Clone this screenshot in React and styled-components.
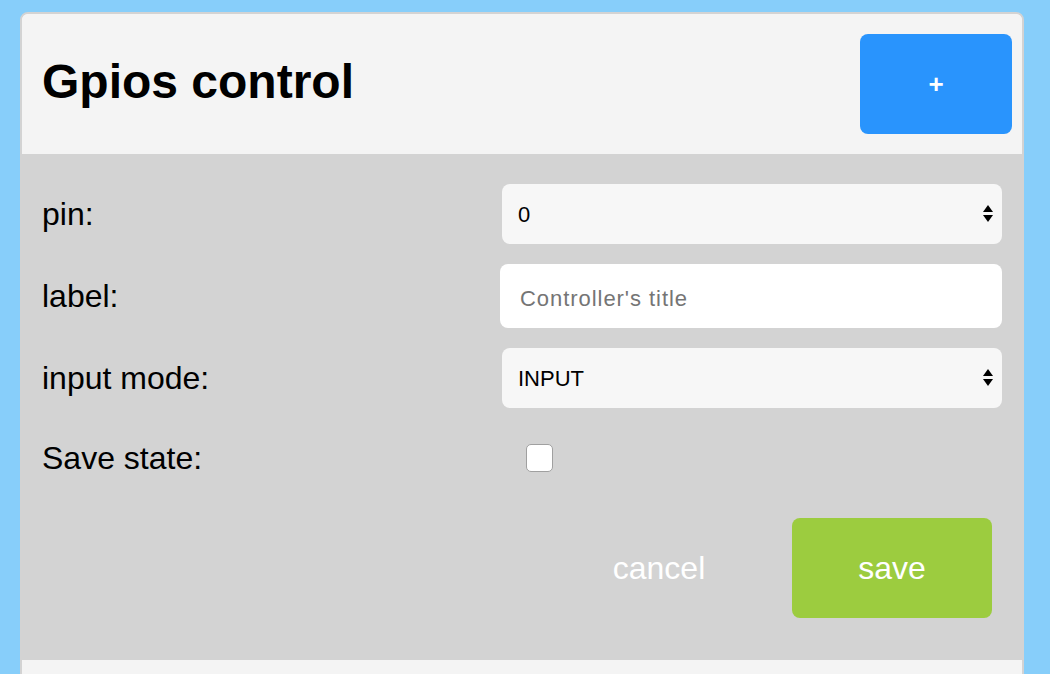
import React from "react";
import styled, { createGlobalStyle } from "styled-components";

const Global = createGlobalStyle`
  html, body {
    margin: 0;
    padding: 0;
    background: #87cefa;
    font-family: "Liberation Sans", Arial, Helvetica, sans-serif;
  }
  * { box-sizing: border-box; }
`;

const Page = styled.div`
  padding: 12px 0 0 20px;
`;

const Card = styled.div`
  width: 1004px;
  border: 2px solid #d3d3d3;
  border-radius: 8px;
  overflow: hidden;
  background: #f4f4f4;
`;

const Header = styled.div`
  display: flex;
  align-items: center;
  justify-content: space-between;
  height: 140px;
  padding: 20px 10px 20px 20px;
  background: #f4f4f4;
`;

const Title = styled.h1`
  margin: 0 0 4px 0;
  font-size: 48px;
  line-height: 1.15;
  font-weight: 700;
  color: #000;
`;

const AddButton = styled.button`
  width: 152px;
  height: 100px;
  border: none;
  border-radius: 8px;
  background: #2994fd;
  color: #fff;
  font-family: inherit;
  font-size: 26px;
  font-weight: 700;
  cursor: pointer;
`;

const Form = styled.form`
  background: #d3d3d3;
  margin: 0 -2px;
  padding: 30px 22px 42px 22px;
  display: flex;
  flex-direction: column;
  gap: 20px;
`;

const Row = styled.div`
  display: grid;
  grid-template-columns: 458px 1fr;
  align-items: center;
  min-height: ${(p) => p.$h || 60}px;
`;

const Label = styled.label`
  font-size: 32px;
  color: #000;
`;

const SelectWrap = styled.div`
  position: relative;
  margin-left: 2px;
`;

const Select = styled.select`
  appearance: none;
  -webkit-appearance: none;
  width: 100%;
  height: 60px;
  border: none;
  border-radius: 8px;
  background: #f7f7f7;
  padding: 0 16px;
  font-family: "Liberation Sans", Arial, sans-serif;
  font-size: 22px;
  color: #000;
  outline: none;
`;

const Arrows = styled.svg`
  position: absolute;
  right: 8px;
  top: 50%;
  transform: translateY(-50%);
  pointer-events: none;
`;

const TextInput = styled.input`
  width: 100%;
  height: 64px;
  border: none;
  border-radius: 8px;
  background: #fff;
  padding: 5px 20px 0 20px;
  font-family: "Liberation Sans", Arial, sans-serif;
  font-size: 22px;
  letter-spacing: 0.95px;
  color: #000;
  outline: none;
  &::placeholder {
    color: #757575;
  }
`;

const Check = styled.input`
  appearance: none;
  -webkit-appearance: none;
  margin: 0 0 0 26px;
  width: 27px;
  height: 28px;
  border: 1px solid #a0a0a0;
  border-radius: 5px;
  background: #fff;
`;

const Actions = styled.div`
  display: flex;
  justify-content: flex-end;
  gap: 33px;
  margin-top: 10px;
  padding-right: 10px;
`;

const ActionButton = styled.button`
  width: 200px;
  height: 100px;
  border: none;
  border-radius: 8px;
  background: ${(p) => (p.$primary ? "#9ccc3f" : "transparent")};
  color: #fff;
  font-family: "Liberation Sans", Arial, sans-serif;
  font-size: 32px;
  cursor: pointer;
`;

const Footer = styled.div`
  height: 60px;
  background: #f4f4f4;
`;

const UpDown = () => (
  <Arrows width="12" height="20" viewBox="0 0 12 20">
    <polygon points="6,1 11,8 1,8" fill="#000" />
    <polygon points="1,11 11,11 6,18" fill="#000" />
  </Arrows>
);

export default function App() {
  return (
    <>
      <Global />
      <Page>
        <Card>
          <Header>
            <Title>Gpios control</Title>
            <AddButton type="button">+</AddButton>
          </Header>
          <Form onSubmit={(e) => e.preventDefault()}>
            <Row>
              <Label>pin:</Label>
              <SelectWrap>
                <Select defaultValue="0">
                  <option value="0">0</option>
                  <option value="1">1</option>
                </Select>
                <UpDown />
              </SelectWrap>
            </Row>
            <Row $h={64}>
              <Label>label:</Label>
              <TextInput placeholder="Controller's title" />
            </Row>
            <Row>
              <Label>input mode:</Label>
              <SelectWrap>
                <Select defaultValue="INPUT">
                  <option value="INPUT">INPUT</option>
                  <option value="OUTPUT">OUTPUT</option>
                </Select>
                <UpDown />
              </SelectWrap>
            </Row>
            <Row>
              <Label>Save state:</Label>
              <Check type="checkbox" />
            </Row>
            <Actions>
              <ActionButton type="button">cancel</ActionButton>
              <ActionButton type="submit" $primary>save</ActionButton>
            </Actions>
          </Form>
          <Footer />
        </Card>
      </Page>
    </>
  );
}
